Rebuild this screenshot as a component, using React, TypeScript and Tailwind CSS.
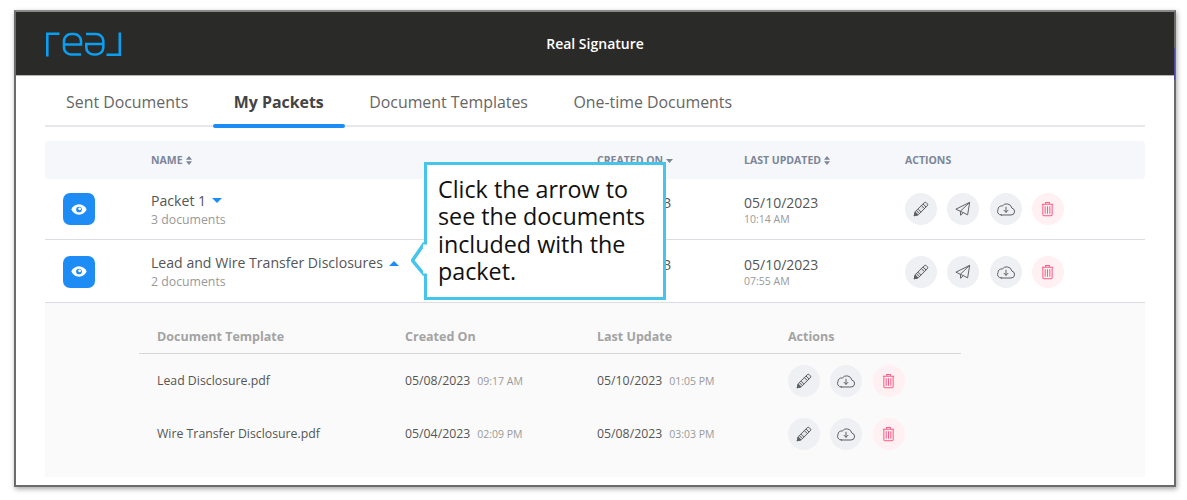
import { type ReactNode } from "react";

const FONT = "font-['Open_Sans','Noto_Sans',sans-serif]";

function PencilIcon() {
  return (
    <svg width="16" height="16" viewBox="0 0 16 16" fill="none" stroke="#5c5f66" strokeWidth="1" strokeLinejoin="round">
      <path d="M1.200 14.800 2.300 10.600 11.200 1.700a1.500 1.500 0 0 1 2.100 0l1 1a1.500 1.500 0 0 1 0 2.100L5.400 13.700Z" fill="#e2e3e7" />
      <path d="M3.400 9.600 6.400 12.600M10 3 13 6M4.900 8.100 7.900 11.100M8.400 4.600 11.400 7.600" />
      <path d="M1.200 14.800 2.200 11 5 13.800Z" fill="#5c5f66" />
    </svg>
  );
}

function PlaneIcon() {
  return (
    <svg width="16" height="16" viewBox="0 0 18 18" fill="none" stroke="#5c5f66" strokeWidth="1.100" strokeLinejoin="round">
      <path d="M16.500 1.500 1 9.200l5 2.300L16.500 1.500Z" />
      <path d="M16.500 1.500 14.200 15.600 9.200 13 6 11.500l.4 4.600 2.800-3.100" />
    </svg>
  );
}

function CloudIcon() {
  return (
    <svg width="18" height="14" viewBox="0 0 18 14" fill="none" stroke="#5c5f66" strokeWidth="1" strokeLinejoin="round" strokeLinecap="round">
      <path d="M4.300 13H14a3.500 3.500 0 0 0 .9-6.900A5.400 5.400 0 0 0 5.300 4 3.500 3.500 0 0 0 1 7.500 3.700 3.700 0 0 0 4.300 13Z" />
      <path d="M9 5.200v5M7 8.300l2 2 2-2" />
    </svg>
  );
}

function TrashIcon() {
  return (
    <svg width="13" height="16" viewBox="0 0 14 16" fill="none" stroke="#fb5c86" strokeWidth="1.100">
      <path d="M1 3h12M5 3V1h4v2" />
      <path d="M2 3v11a1.200 1.200 0 0 0 1.200 1.200h7.600A1.200 1.200 0 0 0 12 14V3" />
      <path d="M4.500 5v8M7 5v8M9.500 5v8" />
    </svg>
  );
}

function EyeIcon() {
  return (
    <svg width="16" height="11" viewBox="0 0 14 10">
      <path d="M7 .3C3.800.3 1.300 2.300 0 5c1.300 2.700 3.800 4.700 7 4.700s5.700-2 7-4.700C12.700 2.300 10.200.3 7 .3Z" fill="#fff" />
      <circle cx="7" cy="5" r="2.600" fill="#1e8cf5" />
      <circle cx="7.600" cy="4.400" r="1.300" fill="#fff" />
    </svg>
  );
}

function SortIcon() {
  return (
    <svg width="6" height="9" viewBox="0 0 6 9" fill="#7c8698" className="ml-[3px] inline-block">
      <path d="M3 0 6 3.700H0ZM3 9 0 5.300h6Z" />
    </svg>
  );
}

function Logo() {
  return (
    <svg width="76" height="25" viewBox="0 0 76 25" fill="none" stroke="#0a9ff0" strokeWidth="2.600">
      <path d="M1.300 24.500V1.800H13.500" />
      <path d="M18.300 12.500H35V9a7 7 0 0 0-7-7h-3a7 7 0 0 0-7 7v6.500a7 7 0 0 0 7 7h10" />
      <path d="M57 12H40.300v3.500a7 7 0 0 0 7 7h3a7 7 0 0 0 7-7V9a7 7 0 0 0-7-7H40" />
      <path d="M60.500 22.800H73.800V.5" />
    </svg>
  );
}

function RoundButton({ danger, children }: { danger?: boolean; children: ReactNode }) {
  return (
    <div
      className={`flex h-8 w-8 items-center justify-center rounded-full ${danger ? "bg-[#fff0f3]" : "bg-[#eff0f4]"}`}
    >
      {children}
    </div>
  );
}

function PacketRow({
  name,
  count,
  expanded,
  created,
  createdTime,
  updated,
  updatedTime,
}: {
  name: string;
  count: string;
  expanded?: boolean;
  created: string;
  createdTime: string;
  updated: string;
  updatedTime: string;
}) {
  return (
    <div
      className={`grid grid-cols-[88px_446px_147px_161px_1fr] items-center border-b border-[#dcdde2] pl-[18px] ${
        expanded ? "h-[63px] pt-[1px]" : "h-[61px]"
      }`}
    >
      <div className="flex h-8 w-8 items-center justify-center rounded-[7px] bg-[#1e8cf5]">
        <EyeIcon />
      </div>
      <div className="pt-[1px]">
        <div className="flex items-center text-[14.100px] leading-[20px] text-[#555]">
          {name}
          <svg width="10" height="5" viewBox="0 0 10 5" fill="#1e8cf5" className="ml-[6px]">
            <path d={expanded ? "M5 0l5 5H0Z" : "M0 0h10L5 5Z"} />
          </svg>
        </div>
        <div className="text-[12.300px] leading-[18px] text-[#999]">{count}</div>
      </div>
      <div>
        <div className="text-[14px] leading-[19px] text-[#555]">{created}</div>
        <div className="text-[10.500px] leading-[14px] text-[#999]">{createdTime}</div>
      </div>
      <div>
        <div className="text-[14px] leading-[19px] text-[#555]">{updated}</div>
        <div className="text-[10.500px] leading-[14px] text-[#999]">{updatedTime}</div>
      </div>
      <div className="flex gap-[10.300px]">
        <RoundButton><PencilIcon /></RoundButton>
        <RoundButton><PlaneIcon /></RoundButton>
        <RoundButton><CloudIcon /></RoundButton>
        <RoundButton danger><TrashIcon /></RoundButton>
      </div>
    </div>
  );
}

function DocumentRow({
  name,
  created,
  createdTime,
  updated,
  updatedTime,
}: {
  name: string;
  created: string;
  createdTime: string;
  updated: string;
  updatedTime: string;
}) {
  return (
    <div className="grid h-[53px] grid-cols-[248px_192px_191px_1fr] items-center pl-[18px] text-[12.300px] text-[#555]">
      <div className="pt-[1px]">{name}</div>
      <div className="flex items-baseline gap-[7px] pt-[1px]">
        {created}
        <span className="text-[10.500px] text-[#999]">{createdTime}</span>
      </div>
      <div className="flex items-baseline gap-[7px] pt-[1px]">
        {updated}
        <span className="text-[10.500px] text-[#999]">{updatedTime}</span>
      </div>
      <div className="flex gap-[10.300px]">
        <RoundButton><PencilIcon /></RoundButton>
        <RoundButton><CloudIcon /></RoundButton>
        <RoundButton danger><TrashIcon /></RoundButton>
      </div>
    </div>
  );
}

const TABS = ["Sent Documents", "My Packets", "Document Templates", "One-time Documents"];

export default function App() {
  return (
    <div className={`h-[500px] w-[1187px] overflow-hidden bg-white pl-[14px] pt-[10px] ${FONT}`}>
      <div className="relative h-[477px] w-[1162px] border-2 border-[#6b6b6b] border-t-[#8a8a8a] bg-white shadow-[1px_2px_5px_rgba(0,0,0,0.35)]">
        <header className="flex h-[64px] items-center justify-center border-b border-[#b5b5b5] bg-[#2a2a29]">
          <div className="absolute left-[30px] top-[20px]">
            <Logo />
          </div>
          <span className="text-[14px] font-semibold text-white">Real Signature</span>
        </header>
        <span className="absolute right-[-1px] top-[36px] h-[32px] w-[1px] bg-[#4a4a9a]" />

        <div className="px-[29px]">
          <nav className="flex h-[51px] gap-[3.500px] border-b-2 border-[#e6e8ec]">
            {TABS.map((tab) => (
              <div
                key={tab}
                className={`relative flex items-center px-[21px] pt-[5px] text-[15.900px] ${
                  tab === "My Packets" ? "font-bold text-[#444]" : "text-[#666]"
                }`}
              >
                {tab}
                {tab === "My Packets" ? (
                  <span className="absolute inset-x-0 bottom-[-3px] h-[4px] rounded-full bg-[#1e8cf5]" />
                ) : null}
              </div>
            ))}
          </nav>

          <div className="mt-[14px] grid h-[38px] grid-cols-[88px_446px_147px_161px_1fr] items-center rounded-[4px] bg-[#f6f7fb] pl-[18px] pt-[1px] text-[10.500px] font-bold uppercase text-[#7c8698]">
            <div />
            <div className="flex items-center">Name<SortIcon /></div>
            <div className="flex items-center">
              Created On
              <svg width="7" height="4" viewBox="0 0 7 4" fill="#7c8698" className="ml-[3px]"><path d="M0 0h7L3.500 4Z" /></svg>
            </div>
            <div className="flex items-center">Last Updated<SortIcon /></div>
            <div>Actions</div>
          </div>

          <PacketRow name="Packet 1" count="3 documents" created="05/08/2023" createdTime="09:17 AM" updated="05/10/2023" updatedTime="10:14 AM" />
          <PacketRow name="Lead and Wire Transfer Disclosures" count="2 documents" expanded created="05/08/2023" createdTime="09:17 AM" updated="05/10/2023" updatedTime="07:55 AM" />

          <div className="h-[174px] bg-[#fafafa] pl-[94px] pt-[22px]">
            <div className="w-[822px]">
              <div className="grid h-[29px] grid-cols-[248px_192px_191px_1fr] items-center border-b border-[#d8d8d8] pb-[4px] pl-[18px] text-[12.500px] font-bold text-[#a3a3a3]">
                <div>Document Template</div>
                <div>Created On</div>
                <div>Last Update</div>
                <div>Actions</div>
              </div>
              <DocumentRow name="Lead Disclosure.pdf" created="05/08/2023" createdTime="09:17 AM" updated="05/10/2023" updatedTime="01:05 PM" />
              <DocumentRow name="Wire Transfer Disclosure.pdf" created="05/04/2023" createdTime="02:09 PM" updated="05/08/2023" updatedTime="03:03 PM" />
            </div>
          </div>
        </div>

        <div className="absolute left-[408px] top-[150px] h-[138px] w-[242px] border-[3.500px] border-[#45c4ec] bg-white pl-[11px] pt-[11px] text-[23.300px] leading-[27.300px] text-[#111]">
          <svg width="18" height="38" viewBox="0 0 18 38" className="absolute left-[-16px] top-[75px]">
            <path d="M13.500 3 1.500 20.500 13.500 35" fill="#fff" stroke="#45c4ec" strokeWidth="3.500" />
            <path d="M12 4.500h6v29h-6Z" fill="#fff" />
          </svg>
          Click the arrow to
          <br />
          see the documents
          <br />
          included with the
          <br />
          packet.
        </div>
      </div>
    </div>
  );
}
